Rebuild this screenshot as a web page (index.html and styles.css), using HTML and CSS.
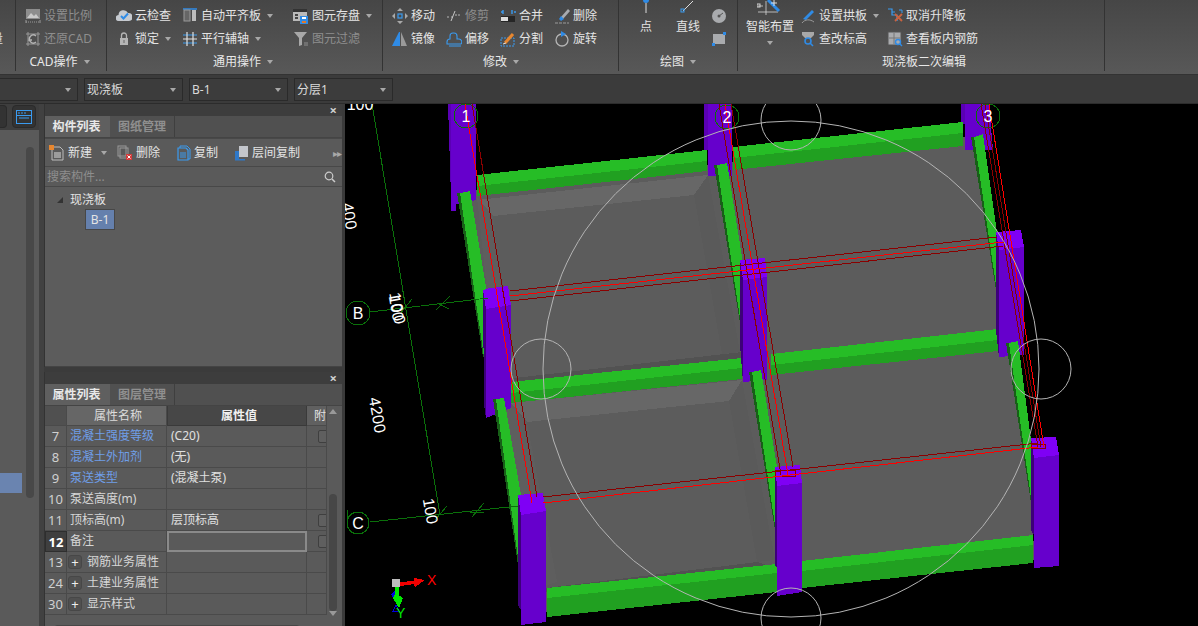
FILE: index.html
```html
<!DOCTYPE html>
<html lang="zh-CN">
<head>
<meta charset="utf-8">
<title>现浇板</title>
<link rel="stylesheet" href="styles.css">
</head>
<body>
<header class="ribbon">
  <section class="group g0"><span class="cut">量</span></section>

  <section class="group g1">
    <div class="tools">
      <div class="col">
        <div class="item off"><svg class="ic" viewBox="0 0 16 16"><rect x="1" y="1" width="14" height="10" fill="#8d8d8d"/><path d="M2 10l4-5 3 3 2-2 3 4z" fill="#c9c9c9"/><path d="M1 14h14" stroke="#9a9a9a" stroke-dasharray="1 1"/><path d="M1 12v3M15 12v3" stroke="#9a9a9a"/></svg><span>设置比例</span></div>
        <div class="item off"><svg class="ic" viewBox="0 0 16 16"><path d="M1 3h14M3 1v14M1 13h14M13 1v14" stroke="#989898" fill="none"/><path d="M11 5a4 4 0 1 0 0 6M5 6l-1 3 3 0" stroke="#b5b5b5" fill="none" stroke-width="1.3"/></svg><span>还原CAD</span></div>
      </div>
    </div>
    <div class="glabel">CAD操作<i class="caret"></i></div>
  </section>

  <section class="group g2">
    <div class="tools">
      <div class="col w66">
        <div class="item"><svg class="ic" viewBox="0 0 16 16"><path d="M3 13a3 3 0 0 1-.5-6A5 5 0 0 1 12 5a4 4 0 0 1 1 8z" fill="#c6cad0"/><path d="M5 8l2.500 2.500L12 5.500" stroke="#2f8be6" stroke-width="2" fill="none"/></svg><span>云检查</span></div>
        <div class="item"><svg class="ic" viewBox="0 0 16 16"><path d="M5.500 7V4.500a2.500 2.500 0 0 1 5 0V7" stroke="#b5b5b5" stroke-width="1.300" fill="none"/><rect x="4" y="7" width="8" height="7" fill="#b5b5b5"/><rect x="7.500" y="9" width="1" height="3" fill="#666"/></svg><span>锁定</span><i class="caret"></i></div>
      </div>
      <div class="col w111">
        <div class="item"><svg class="ic" viewBox="0 0 16 16"><path d="M1 1h14" stroke="#2f8be6" stroke-width="1.500"/><rect x="2" y="2" width="6" height="11" fill="#666" stroke="#999"/><rect x="10" y="2" width="4" height="11" fill="#bdbdbd"/></svg><span>自动平齐板</span><i class="caret"></i></div>
        <div class="item"><svg class="ic" viewBox="0 0 16 16"><path d="M1 4h14M1 12h14" stroke="#3a9bf0" stroke-width="1.200"/><path d="M5 1v14M11 1v14" stroke="#e2e2e2" stroke-width="1.200"/><path d="M1 8h14" stroke="#e2e2e2"/></svg><span>平行辅轴</span><i class="caret"></i></div>
      </div>
      <div class="col">
        <div class="item"><svg class="ic" viewBox="0 0 16 16"><rect x="0" y="1" width="14" height="12" fill="#b9b9b9"/><rect x="0" y="1" width="14" height="3" fill="#333"/><rect x="2" y="6" width="3" height="2" fill="#444"/><rect x="2" y="9" width="3" height="2" fill="#444"/><rect x="7" y="8" width="8" height="8" fill="#2f8be6"/><rect x="9" y="9" width="4" height="2" fill="#fff"/><rect x="9" y="13" width="4" height="2" fill="#e07a2c"/></svg><span>图元存盘</span><i class="caret"></i></div>
        <div class="item off"><svg class="ic" viewBox="0 0 16 16"><path d="M1 1h13L9 7v7L6 15V7z" fill="#a8a8a8"/><path d="M11 12h4M11 14h4" stroke="#8f8f8f"/></svg><span>图元过滤</span></div>
      </div>
    </div>
    <div class="glabel">通用操作<i class="caret"></i></div>
  </section>

  <section class="group g3">
    <div class="tools">
      <div class="col w54">
        <div class="item"><svg class="ic" viewBox="0 0 16 16"><path d="M8 0l3 3H5zM8 16l-3-3h6zM0 8l3-3v6zM16 8l-3 3V5z" fill="#a9a9a9"/><rect x="6" y="6" width="4" height="4" fill="none" stroke="#3a9bf0" stroke-width="1.200"/></svg><span>移动</span></div>
        <div class="item"><svg class="ic" viewBox="0 0 16 16"><path d="M0 15l7-14 1 0 0 14z" fill="#2f8be6"/><path d="M9 1l6 14H9z" fill="#9a9a9a"/></svg><span>镜像</span></div>
      </div>
      <div class="col w54">
        <div class="item off"><svg class="ic" viewBox="0 0 16 16"><path d="M1 9h2.500M5 9h2M9 7h6" stroke="#b5b5b5" stroke-dasharray="2 1"/><path d="M5 13L9 3" stroke="#c6c6c6"/></svg><span>修剪</span></div>
        <div class="item"><svg class="ic" viewBox="0 0 16 16"><path d="M1 11a3 3 0 0 1 3-3V5a3 3 0 0 1 3-3h1a3 3 0 0 1 3 3v3h2a3 3 0 0 1 2 5H1z" stroke="#3a9bf0" fill="none" stroke-width="1.100"/><path d="M3 15h12" stroke="#3a9bf0"/></svg><span>偏移</span></div>
      </div>
      <div class="col w54">
        <div class="item"><svg class="ic" viewBox="0 0 16 16"><path d="M3 2v4M1 4h2M12 2v4M14 4h2" stroke="#3a9bf0" stroke-width="1.400"/><rect x="1" y="8" width="14" height="6" fill="#262626"/><rect x="1" y="9" width="7" height="4" fill="#dcdcdc"/></svg><span>合并</span></div>
        <div class="item"><svg class="ic" viewBox="0 0 16 16"><rect x="1" y="7" width="13" height="8" fill="none" stroke="#3a9bf0" stroke-dasharray="2 1"/><path d="M5 12l8-9" stroke="#e8872f" stroke-width="3"/><path d="M3 13l3-1" stroke="#ddd"/></svg><span>分割</span></div>
      </div>
      <div class="col">
        <div class="item"><svg class="ic" viewBox="0 0 16 16"><path d="M7 9l7-8 2 2-7 8z" fill="#a8abb0"/><path d="M5 11l2-3 3 3-3 2z" fill="#2f8be6"/><path d="M1 15h14" stroke="#9a9a9a" stroke-dasharray="3 1"/></svg><span>删除</span></div>
        <div class="item"><svg class="ic" viewBox="0 0 16 16"><circle cx="8" cy="9" r="6" fill="none" stroke="#b5b5b5" stroke-width="1.300"/><path d="M7 0l5 3-5 3z" fill="#2f8be6"/></svg><span>旋转</span></div>
      </div>
    </div>
    <div class="glabel">修改<i class="caret"></i></div>
  </section>

  <section class="group g4">
    <div class="tools">
      <div class="large w42"><svg class="lic" viewBox="0 0 16 16"><circle cx="8" cy="0" r="3" fill="#2f8be6"/><path d="M8 3v10" stroke="#ddd"/></svg><span>点</span></div>
      <div class="large w42"><svg class="lic" viewBox="0 0 16 16"><path d="M3 11L13 1" stroke="#ddd"/><rect x="1" y="9" width="3" height="3" fill="none" stroke="#3a9bf0"/></svg><span>直线</span></div>
      <div class="col smalls">
        <div class="item"><svg class="ic" viewBox="0 0 16 16"><circle cx="8" cy="8" r="7" fill="#a9abae"/><circle cx="8" cy="8" r="1.500" fill="#555"/><path d="M8 8l4-3" stroke="#555"/></svg></div>
        <div class="item"><svg class="ic" viewBox="0 0 16 16"><rect x="2" y="3" width="12" height="10" fill="#a9abae"/><rect x="12" y="1" width="3" height="3" fill="#2f8be6"/><rect x="1" y="12" width="3" height="3" fill="#2f8be6"/></svg></div>
      </div>
    </div>
    <div class="glabel">绘图<i class="caret"></i></div>
  </section>

  <section class="group g5">
    <div class="tools">
      <div class="large w62"><svg class="lic wand" viewBox="0 0 26 16"><path d="M1 6h5M9 1v14M1 12h20" stroke="#d5d5d5" stroke-width=".8"/><rect x="0" y="4" width="3" height="3" fill="none" stroke="#d5d5d5"/><path d="M11 0l11 11" stroke="#2f8be6" stroke-width="3"/><path d="M17 0v6M14 3h6" stroke="#fff" stroke-width=".8"/></svg><span>智能布置</span><i class="caret"></i></div>
      <div class="col w87">
        <div class="item"><svg class="ic" viewBox="0 0 16 16"><path d="M3 11l9-9 2 2-8 8z" fill="#2f8be6"/><path d="M2 15c3-4 8-4 12-1" stroke="#9a9a9a" fill="none"/></svg><span>设置拱板</span><i class="caret"></i></div>
        <div class="item"><svg class="ic" viewBox="0 0 16 16"><path d="M2 1h12v3l-3 3H5L2 4z" fill="#a8a8a8"/><circle cx="8" cy="10" r="3" fill="none" stroke="#2f8be6" stroke-width="1.600"/><path d="M10 12l3 3" stroke="#2f8be6" stroke-width="1.600"/></svg><span>查改标高</span></div>
      </div>
      <div class="col">
        <div class="item"><svg class="ic" viewBox="0 0 16 16"><path d="M1 1h4v6h5v6M5 4h3" stroke="#3a9bf0" stroke-width="1.200" fill="none"/><path d="M8 6l7 7M15 6l-7 7" stroke="#c9623f" stroke-width="1.800"/><path d="M12 2h3v3" stroke="#3a9bf0" fill="none"/></svg><span>取消升降板</span></div>
        <div class="item"><svg class="ic" viewBox="0 0 16 16"><rect x="1" y="1" width="13" height="13" fill="#a9abae" stroke="#555"/><path d="M7 2v11M2 7h11" stroke="#777"/><circle cx="11" cy="11" r="2.500" fill="none" stroke="#2f8be6" stroke-width="1.400"/><path d="M13 13l2 2" stroke="#2f8be6" stroke-width="1.400"/></svg><span>查看板内钢筋</span></div>
      </div>
    </div>
    <div class="glabel">现浇板二次编辑</div>
  </section>
</header>

<nav class="selbar">
  <div class="sel s0"><i class="caret"></i></div>
  <div class="sel"><span>现浇板</span><i class="caret"></i></div>
  <div class="sel"><span>B-1</span><i class="caret"></i></div>
  <div class="sel"><span>分层1</span><i class="caret"></i></div>
</nav>

<main class="work">
  <aside class="nav">
    <div class="navtabs">
      <div class="navbtn first"></div>
      <div class="navbtn"><svg viewBox="0 0 16 14" width="16" height="14"><rect x=".5" y=".5" width="15" height="13" fill="none" stroke="#3a9bf0"/><path d="M.5 5.500h15M2 3h2M5 3h2M8 3h2M3 8h10" stroke="#3a9bf0"/></svg></div>
    </div>
    <div class="navbody">
      <div class="navlist"><div class="navsel"></div></div>
      <div class="navscroll"></div>
    </div>
  </aside>

  <div class="docks">
    <section class="panel top">
      <div class="ptitle"><span class="close">×</span></div>
      <div class="ptabs"><div class="ptab on">构件列表</div><div class="ptab">图纸管理</div></div>
      <div class="ptools">
        <div class="pt t1"><svg viewBox="0 0 16 16" width="16" height="16"><path d="M3 2h8l3 3v10H3z" fill="none" stroke="#bbb"/><path d="M5 8h7M5 10h7M5 12h7" stroke="#ddd"/><rect x="0" y="0" width="5" height="5" fill="#e8872f"/></svg><span>新建</span><i class="caret"></i></div>
        <div class="pt t2"><svg viewBox="0 0 16 16" width="16" height="16"><rect x="1" y="1" width="8" height="10" fill="none" stroke="#999"/><rect x="3" y="3" width="8" height="10" fill="none" stroke="#999"/><rect x="9" y="9" width="6" height="6" fill="#d23b3b"/><path d="M10.500 10.500l3 3M13.500 10.500l-3 3" stroke="#fff"/></svg><span>删除</span></div>
        <div class="pt t3"><svg viewBox="0 0 16 16" width="16" height="16"><path d="M4 3V1h7l3 3v10h-2" fill="none" stroke="#3a9bf0"/><path d="M2 3h8l2 2v10H2z" fill="none" stroke="#3a9bf0" stroke-width="1.200"/><path d="M4 8h6M4 10h6M4 12h6" stroke="#3a9bf0"/></svg><span>复制</span></div>
        <div class="pt t4"><svg viewBox="0 0 16 16" width="16" height="16"><path d="M1 6h4v8h6v1.500H1z" fill="#2f78c8"/><rect x="5" y="1" width="9" height="11" fill="#c3c6cc"/></svg><span>层间复制</span></div>
        <div class="more">▸▸</div>
      </div>
      <div class="psearch"><span>搜索构件...</span><svg viewBox="0 0 12 12" width="12" height="12"><circle cx="5" cy="5" r="3.800" fill="none" stroke="#ccc" stroke-width="1.200"/><path d="M8 8l3 3" stroke="#ccc" stroke-width="1.500"/></svg></div>
      <div class="ptree">
        <div class="tnode"><i class="tri"></i><span>现浇板</span></div>
        <div class="tleaf">B-1</div>
      </div>
    </section>

    <section class="panel bottom">
      <div class="ptitle"><span class="close">×</span></div>
      <div class="ptabs"><div class="ptab on">属性列表</div><div class="ptab">图层管理</div></div>
      <div class="tablewrap">
        <div class="table">
          <div class="row head"><div class="c n"></div><div class="c name">属性名称</div><div class="c val">属性值</div><div class="c att">附</div></div>
          <div class="row"><div class="c n">7</div><div class="c name link">混凝土强度等级</div><div class="c val">(C20)</div><div class="c att"><i class="chk"></i></div></div>
          <div class="row"><div class="c n">8</div><div class="c name link">混凝土外加剂</div><div class="c val">(无)</div><div class="c att"></div></div>
          <div class="row"><div class="c n">9</div><div class="c name link">泵送类型</div><div class="c val">(混凝土泵)</div><div class="c att"></div></div>
          <div class="row"><div class="c n">10</div><div class="c name">泵送高度(m)</div><div class="c val"></div><div class="c att"></div></div>
          <div class="row"><div class="c n">11</div><div class="c name">顶标高(m)</div><div class="c val">层顶标高</div><div class="c att"><i class="chk"></i></div></div>
          <div class="row"><div class="c n cur">12</div><div class="c name">备注</div><div class="c val edit"></div><div class="c att"><i class="chk"></i></div></div>
          <div class="row"><div class="c n">13</div><div class="c name"><i class="plus">+</i>钢筋业务属性</div><div class="c val"></div><div class="c att"></div></div>
          <div class="row"><div class="c n">24</div><div class="c name"><i class="plus">+</i>土建业务属性</div><div class="c val"></div><div class="c att"></div></div>
          <div class="row"><div class="c n">30</div><div class="c name"><i class="plus">+</i>显示样式</div><div class="c val"></div><div class="c att"></div></div>
        </div>
        <div class="vscroll"><i class="up"></i><div class="thumb"></div><i class="down"></i></div>
      </div>
      <div class="hscroll"><div class="hthumb"></div></div>
    </section>
  </div>

  <div class="canvas">
    <svg class="scene" viewBox="345 104 853 522" width="853" height="522">
      <!-- slabs -->
      <polygon class="slab" points="476,190 983,135 996,232 1018,341 1031,440 1034,560 546,612 521,495 504,398 486,300 470,191"/>
      <polygon class="bev" points="477,200 708,175 694,195 493,216"/>
      <polygon class="bev2" points="477,197 493,216 512,380 497,382"/>
      <polygon class="bev3" points="694,195 708,175 740,352 722,354"/>
      <polygon class="strip" points="497,380 742,352 742,358 497,384"/>
      <polygon class="bev" points="511,403 742,380 729,401 527,422"/>
      <polygon class="bev2" points="504,400 527,422 557,582 530,590"/>
      <polygon class="bev3" points="729,401 742,380 775,560 757,562"/>
      <polygon class="strip" points="530,590 757,562 767,565 530,594"/>

      <!-- back columns -->
      <polygon class="cold" points="448,104 476,104 476,198 451,198"/>
      <polygon class="col" points="451,104 476,104 476,200 456,204 456,211 451,211"/>
      <polygon class="cold" points="704,104 732,104 732,176 708,176 708,150 704,150"/>
      <polygon class="col" points="708,104 732,104 732,176 708,176"/>
      <polygon class="cold" points="961,104 989,104 989,150 965,150 965,124 961,124"/>
      <polygon class="col" points="965,104 989,104 993,150 965,150"/>

      <!-- back beams -->
      <polygon class="gl" points="477,175 707,150 707,161 477,186"/>
      <polygon class="gd" points="477,186 707,161 707,171 477,196"/>
      <polygon class="gl" points="733,147 963,122 963,133 733,158"/>
      <polygon class="gd" points="733,158 963,133 963,146 733,170"/>

      <!-- upper cross beams -->
      <polygon class="gv" points="457,193 460,193 484,357 483,357"/>
      <polygon class="gl" points="460,193 470,191 486,287 486,357 484,357"/>
      <polygon class="gv" points="714,165 717,165 741,325 740,323"/>
      <polygon class="gl" points="717,165 727,163 742,257 741,325"/>
      <polygon class="gv" points="971,137 974,137 997,292 996,290"/>
      <polygon class="gl" points="974,137 983,134 997,232 997,292"/>

      <!-- middle beams -->
      <polygon class="gl" points="511,382 742,358 742,368 511,393"/>
      <polygon class="gd" points="511,393 742,368 742,379 511,403"/>
      <polygon class="gl" points="771,354 998,329 998,340 771,365"/>
      <polygon class="gd" points="771,365 998,340 998,351 771,375"/>

      <!-- middle columns -->
      <polygon class="coln" points="483,290 486,290 486,418 484,405"/>
      <polygon class="col" points="486,309 511,305 511,408 486,418"/>
      <polygon class="cap" points="483,290 490,288 508,286 511,305 486,309"/>
      <polygon class="coln" points="740,260 743,260 743,382 740,345"/>
      <polygon class="col" points="743,280 767,277 767,380 743,382"/>
      <polygon class="cap" points="740,260 765,258 767,277 743,280"/>
      <polygon class="coln" points="996,232 999,232 999,357 996,330"/>
      <polygon class="col" points="999,250 1024,247 1024,355 999,357"/>
      <polygon class="cap" points="996,232 1021,230 1024,247 999,250"/>

      <!-- lower cross beams -->
      <polygon class="gv" points="493,399 496,399 519,565 518,565"/>
      <polygon class="gl" points="496,399 504,398 521,495 519,565"/>
      <polygon class="gv" points="749,372 752,372 776,532 775,530"/>
      <polygon class="gl" points="752,372 761,370 777,467 776,532"/>
      <polygon class="gv" points="1006,343 1009,343 1032,505 1031,503"/>
      <polygon class="gl" points="1009,343 1018,341 1031,440 1032,505"/>

      <!-- front beams -->
      <polygon class="gl" points="547,588 777,564 777,573 547,598"/>
      <polygon class="gd" points="547,598 777,573 777,592 547,617"/>
      <polygon class="gl" points="802,561 1033,535 1033,545 802,571"/>
      <polygon class="gd" points="802,571 1033,545 1033,563 802,588"/>

      <!-- front columns -->
      <polygon class="coln" points="518,495 521,495 521,610 518,605"/>
      <polygon class="col" points="521,513 546,511 546,622 521,625"/>
      <polygon class="cap" points="518,495 543,493 546,511 521,515"/>
      <polygon class="coln" points="775,467 777,467 777,568 775,565"/>
      <polygon class="col" points="777,486 802,483 802,592 777,596"/>
      <polygon class="cap" points="775,467 800,465 802,483 777,486"/>
      <polygon class="coln" points="1031,438 1034,438 1034,535 1031,530"/>
      <polygon class="col" points="1034,458 1059,455 1059,566 1034,568"/>
      <polygon class="cap" points="1031,438 1056,437 1059,455 1034,458"/>

      <!-- grid lines -->
      <g class="axis">
        <path d="M372 104L440 515"/>
        <path d="M370 312L488 298"/>
        <path d="M370 522L518 506"/>
        <path d="M347 510V527"/>
        <path d="M400 314L412 299M436 310L450 296M437 303L449 309"/>
        <path d="M435 520L447 506M472 517L484 503M470 512L484 512"/>
        <path d="M402 104L405 100"/>
        <circle cx="358" cy="313" r="12"/>
        <circle cx="358" cy="523" r="11"/>
        <circle cx="466" cy="116" r="12"/>
        <circle cx="727" cy="117" r="12"/>
        <circle cx="988" cy="116" r="12"/>
      </g>

      <!-- red reinforcement lines -->
      <g class="dred">
        <path d="M472 104L537 497"/>
        <path d="M719 104L781 475"/>
        <path d="M731 104L793 467"/>
        <path d="M981 104L1038 447"/>
        <path d="M985 104L1041 447"/>
        <path d="M510 291L997 237"/>
        <path d="M510 301L1003 246"/>
        <path d="M543 497L1038 443"/>
        <path d="M775 470h20v6h-20z"/>
        <path d="M1031 444h14v4h-14z"/>
      </g>
      <g class="red">
        <path d="M465 104L532 503"/>
        <path d="M725 104L788 475"/>
        <path d="M989 104L1044 447"/>
        <path d="M510 296L1003 242"/>
        <path d="M543 503L1038 447"/>
      </g>

      <!-- view cube rings -->
      <g class="ring">
        <circle cx="791" cy="369" r="248"/>
        <circle cx="791" cy="120" r="30"/>
        <circle cx="791" cy="618" r="30"/>
        <circle cx="541" cy="369" r="30"/>
        <circle cx="1041" cy="369" r="30"/>
      </g>

      <!-- grid labels -->
      <g class="lbl">
        <text x="360" y="110" text-anchor="middle">100</text>
        <text x="466" y="122" text-anchor="middle">1</text>
        <text x="727" y="123" text-anchor="middle">2</text>
        <text x="988" y="122" text-anchor="middle">3</text>
        <text x="358" y="319" text-anchor="middle">B</text>
        <text x="358" y="529" text-anchor="middle">C</text>
        <text transform="translate(344 217) rotate(80)" text-anchor="middle">400</text>
        <text transform="translate(391 309) rotate(80)" text-anchor="middle" textLength="26">100</text>
        <text transform="translate(392 309) rotate(80)" text-anchor="middle" textLength="32">100</text>
        <text transform="translate(372 416) rotate(80)" text-anchor="middle" textLength="36">4200</text>
        <text transform="translate(425 512) rotate(80)" text-anchor="middle" textLength="26">100</text>
      </g>

      <!-- axis gizmo -->
      <polygon class="gzb" points="391,594 395,590 399,596 395,602"/>
      <path class="gzbl" d="M393 611L396 605 399 611z"/>
      <rect class="gzs" x="392" y="579" width="8" height="8"/>
      <polygon class="gzr" points="400,582 414,581 414,578 425,580 415,587 414,584 400,586"/>
      <rect class="gzg" x="395" y="587" width="4" height="8"/>
      <polygon class="gzg" points="396,593 403,598 399,608 393,598"/>
      <text class="gztx" x="427" y="585">X</text>
      <text class="gzty" x="396" y="618">Y</text>
    </svg>
  </div>
</main>
</body>
</html>
```

FILE: styles.css
```css
* { box-sizing: border-box; }
html, body { margin: 0; height: 100%; }
body {
  width: 1198px;
  height: 626px;
  overflow: hidden;
  display: flex;
  flex-direction: column;
  background: #3a3a3a;
  color: #e4e4e4;
  font: 12px/16px "Noto Sans", "Noto Sans CJK SC", sans-serif;
}
i { font-style: normal; }

/* ribbon */
.ribbon {
  height: 75px;
  flex: none;
  display: flex;
  align-items: flex-start;
  background: linear-gradient(#464646, #585858);
  border-bottom: 1px solid #333;
}
.group {
  height: 71px;
  flex: none;
  border-right: 1px solid #333;
  display: flex;
  flex-direction: column;
  padding-left: 9px;
  overflow: hidden;
}
.g0 { width: 16px; padding: 0; }
.cut { margin: 31px 0 0 -9px; color: #ddd; }
.g1 { width: 91px; }
.g2 { width: 276px; }
.g3 { width: 236px; }
.g4 { width: 119px; padding-left: 6px; }
.g5 { width: 367px; padding-left: 0; }
.tools { height: 53px; flex: none; display: flex; padding-top: 4px; }
.col { display: flex; flex-direction: column; flex: none; }
.w54 { width: 54px; }
.w66 { width: 66px; }
.w87 { width: 87px; }
.w111 { width: 111px; }
.smalls { margin-left: 2px; }
.item {
  height: 23px;
  display: flex;
  align-items: center;
  gap: 3px;
  white-space: nowrap;
}
.item .caret { margin-left: 3px; }
.item.off { color: #8e8e8e; }
.ic { width: 16px; height: 16px; flex: none; }
.caret {
  display: inline-block;
  flex: none;
  width: 0;
  height: 0;
  margin-left: 6px;
  border-top: 4px solid #a8a8a8;
  border-left: 3.5px solid transparent;
  border-right: 3.5px solid transparent;
}
.glabel {
  height: 18px;
  display: flex;
  align-items: center;
  justify-content: center;
  white-space: nowrap;
  color: #e8e8e8;
}
.g1 .glabel { margin-left: -6px; margin-right: 6px; }
.g2 .glabel { margin-right: 12px; }
.g3 .glabel { margin-left: -8px; }
.g4 .glabel { margin-right: 6px; }
.g5 .glabel { margin-left: 6px; }
.large {
  flex: none;
  margin-top: -4px;
  display: flex;
  flex-direction: column;
  align-items: center;
  white-space: nowrap;
}
.w42 { width: 42px; }
.w62 { width: 62px; padding-left: 2px; }
.lic { width: 16px; height: 16px; flex: none; overflow: hidden; }
.wand { width: 26px; }
.large span { line-height: 20px; margin-top: 1px; }
.large .caret { margin: 4px 0 0; }

/* select bar */
.selbar {
  height: 29px;
  flex: none;
  display: flex;
  gap: 6px;
  padding-top: 3px;
  background: #3b3b3b;
  border-bottom: 1px solid #2c2c2c;
}
.sel {
  width: 99px;
  height: 23px;
  display: flex;
  align-items: center;
  justify-content: space-between;
  padding: 0 6px 0 2px;
  background: #3c3c3c;
  border: 1px solid #2a2a2a;
  color: #dadada;
}
.s0 { width: 78px; border-left: 0; justify-content: flex-end; }
.sel .caret { margin: 0; }

/* main */
.work { flex: 1; min-height: 0; display: flex; }
.nav {
  width: 44px;
  flex: none;
  display: flex;
  flex-direction: column;
  border-right: 5px solid #414141;
  background: #5a5a5a;
}
.navtabs {
  height: 26px;
  flex: none;
  display: flex;
  gap: 5px;
  padding-top: 1px;
  background: #3e3e3e;
}
.navbtn {
  width: 24px;
  height: 23px;
  display: flex;
  align-items: center;
  justify-content: center;
  background: #333;
  border: 1px solid #2a2a2a;
  border-radius: 4px;
}
.navbtn.first { width: 7px; border-left: 0; border-radius: 0 4px 4px 0; }
.navbody { flex: 1; position: relative; }
.navlist { padding-top: 343px; }
.navsel { width: 22px; height: 20px; background: #6a84b0; }
.navscroll {
  position: absolute;
  left: 26px;
  top: 17px;
  width: 8px;
  height: 351px;
  border-radius: 4px;
  background: #484848;
}

/* docks */
.docks {
  width: 301px;
  flex: none;
  display: flex;
  flex-direction: column;
  gap: 5px;
  padding-right: 3px;
  background: #3b3b3b;
}
.panel { display: flex; flex-direction: column; background: #5a5a5a; border-left: 1px solid #333; }
.panel.top { height: 263px; flex: none; }
.panel.bottom { flex: 1; min-height: 0; }
.ptitle {
  height: 12px;
  flex: none;
  display: flex;
  justify-content: flex-end;
  align-items: center;
  padding-right: 5px;
  background: #3d3d3d;
}
.close { color: #cfcfcf; font-size: 13px; font-weight: 700; line-height: 12px; }
.ptabs { height: 22px; flex: none; display: flex; background: #505050; border-bottom: 1px solid #444; }
.ptab {
  width: 65px;
  display: flex;
  align-items: center;
  justify-content: center;
  color: #8f8f8f;
  font-weight: 700;
  border-right: 1px solid #3f3f3f;
}
.ptab.on { background: #5f5f5f; color: #e8e8e8; border-right: 0; padding-right: 2px; }
.ptools {
  height: 29px;
  flex: none;
  display: flex;
  align-items: center;
  padding-left: 4px;
  border-bottom: 1px solid #484848;
  border-top: 1px solid #484848;
}
.pt { display: flex; align-items: center; gap: 3px; flex: none; }
.t1 { width: 68px; }
.t2 { width: 59px; }
.t3 { width: 58px; gap: 2px; }
.t4 { width: 99px; gap: 2px; }
.more { color: #a8a8a8; font-size: 10px; letter-spacing: -1px; }
.psearch {
  height: 20px;
  flex: none;
  display: flex;
  align-items: center;
  justify-content: space-between;
  padding: 1px 6px 0 2px;
  color: #8e8e8e;
  border-bottom: 1px solid #484848;
}
.ptree { flex: 1; padding: 3px 0 0 12px; background: #5c5c5c; border-bottom: 1px solid #444; }
.tnode { height: 19px; display: flex; align-items: center; gap: 7px; }
.tri {
  width: 0;
  height: 0;
  border-bottom: 6px solid #333;
  border-left: 6px solid transparent;
}
.tleaf {
  width: 30px;
  height: 21px;
  margin-left: 28px;
  display: flex;
  align-items: center;
  justify-content: center;
  background: #6580ad;
  border: 1px solid #474747;
}

/* property table */
.tablewrap { display: flex; height: 210px; flex: none; }
.table { width: 282px; flex: none; overflow: hidden; }
.row {
  display: grid;
  grid-template-columns: 22px 100px 140px 20px;
  height: 21px;
  background: #5a5a5a;
}
.row.head { height: 20px; }
.c {
  display: flex;
  align-items: center;
  padding-left: 3px;
  white-space: nowrap;
  overflow: hidden;
  border-right: 1px solid #4a4a4a;
  border-bottom: 1px solid #4a4a4a;
  color: #e0e0e0;
}
.n { justify-content: center; padding: 0; color: #d0d0d0; font-size: 13px; }
.val { padding-left: 4px; }
.name { color: #d6d6d6; }
.link { color: #6f9ee8; }
.head .n { background: #505050; }
.head .name { background: #666; justify-content: center; color: #dcdcdc; }
.head .val { background: #474747; justify-content: center; font-weight: 700; border: 1px solid #3a3a3a; border-top: 0; color: #f0f0f0; }
.head .att { background: #606060; padding-left: 7px; }
.cur { background: #3f3f3f; color: #fff; font-weight: 700; border: 1px solid #2e2e2e; }
.edit { border: 2px solid #8a8a8a; }
.chk {
  flex: none;
  width: 12px;
  height: 13px;
  margin-left: 8px;
  border: 1px solid #3f3f3f;
  border-radius: 2px;
  background: #5f5f5f;
}
.att { padding-left: 3px; }
.plus {
  flex: none;
  width: 14px;
  height: 14px;
  margin: 0 5px 0 -2px;
  display: flex;
  align-items: center;
  justify-content: center;
  font-size: 13px;
  line-height: 13px;
  background: #505050;
  border: 1px solid #474747;
  border-radius: 3px;
  color: #eee;
}
.vscroll {
  flex: 1;
  display: flex;
  flex-direction: column;
  align-items: center;
  padding: 3px 3px 0 0;
}
.up, .down { width: 0; height: 0; border-left: 4px solid transparent; border-right: 4px solid transparent; }
.up { border-bottom: 5px solid #999; }
.down { border-top: 5px solid #999; }
.thumb { width: 8px; height: 117px; margin-top: 80px; border-radius: 4px; background: #474747; }
.hscroll { flex: 1; padding: 9px 42px 0 9px; overflow: hidden; }
.hthumb { height: 8px; border-radius: 4px; background: #474747; }

/* canvas */
.canvas { flex: 1; min-width: 0; background: #000; overflow: hidden; }
.scene { display: block; shape-rendering: crispEdges; }
.slab { fill: #5c5c5c; }
.bev { fill: #676767; }
.bev2 { fill: #5e5e5e; }
.bev3 { fill: #5a5a5a; }
.strip { fill: #525252; }
.col { fill: #6600cc; }
.cold { fill: #5a00b4; }
.coln { fill: #3d007a; }
.cap { fill: #7f00f5; }
.gl { fill: #26bd26; }
.gd { fill: #21a021; }
.gv { fill: #176017; }
.axis path, .axis circle { fill: none; stroke: #0a700a; stroke-width: 1; }
.dred path { fill: none; stroke: #8b0000; stroke-width: 1; }
.red path { fill: none; stroke: #f00; stroke-width: 1; }
.ring circle { fill: none; stroke: #b4b4b4; stroke-width: 1; shape-rendering: auto; }
.lbl text { fill: #fff; font: 16px "Liberation Sans", sans-serif; }
.gzb { fill: #0000e0; }
.gzbl { fill: none; stroke: #0000e0; }
.gzs { fill: #bdbdbd; }
.gzr { fill: #f00000; }
.gzg { fill: #00e800; }
.gztx { fill: #f00; font: 14px "Liberation Sans", sans-serif; }
.gzty { fill: #00e800; font: 14px "Liberation Sans", sans-serif; }
```
